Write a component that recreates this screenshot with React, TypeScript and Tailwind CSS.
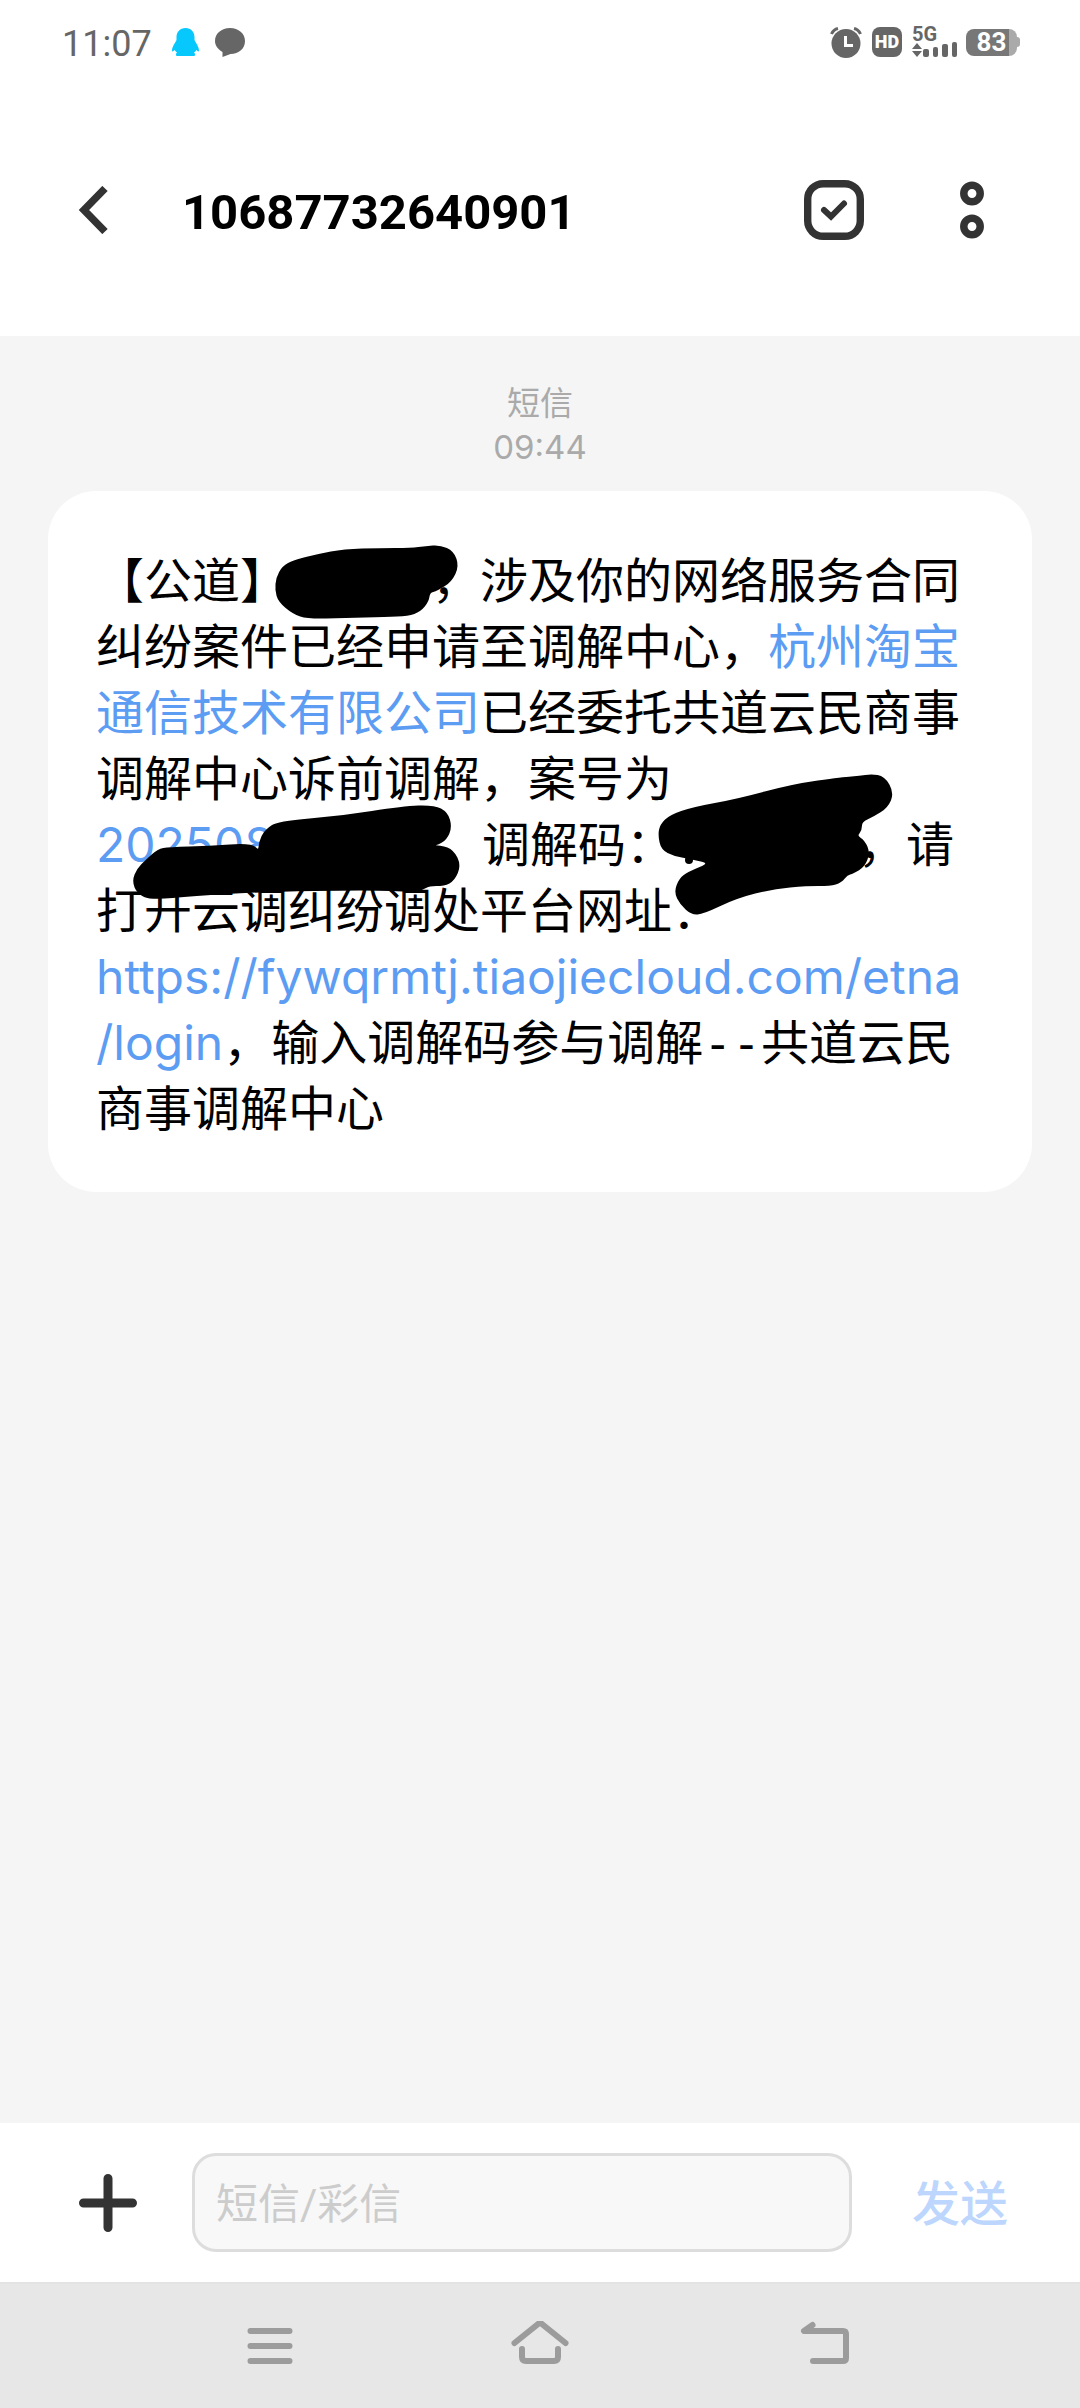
type Point = [number, number];

// closed smooth outline through the midpoints of the given points
function blob(points: Point[]) {
  const mid = (a: Point, b: Point) => `${(a[0] + b[0]) / 2} ${(a[1] + b[1]) / 2}`;
  const last = points[points.length - 1];
  let d = `M${mid(last, points[0])}`;
  points.forEach((p, i) => {
    d += `Q${p[0]} ${p[1]} ${mid(p, points[(i + 1) % points.length])}`;
  });
  return d + "Z";
}

const nameMark: Point[] = [
  [6, 50], [7, 38], [13, 27], [24, 21], [48, 15], [74, 10], [110, 9], [141, 9], [156, 7], [170, 6],
  [183, 12], [188, 26], [181, 41], [167, 50], [159, 52], [158, 61], [150, 71], [138, 75], [116, 76],
  [74, 77], [38, 78], [23, 73], [9, 61],
];

const caseMark: Point[] = [
  [138, 48], [139, 38], [144, 27], [157, 18], [220, 13], [282, 3], [313, 2], [326, 9], [330, 23],
  [325, 35], [315, 41], [300, 42], [320, 42], [332, 47], [339, 61], [333, 76], [323, 81], [308, 81],
  [300, 86], [290, 87], [248, 85], [138, 87], [73, 91], [30, 95], [17, 89], [12, 77], [17, 65],
  [25, 57], [37, 46], [48, 44], [88, 43], [130, 40],
];

const codeMark: Point[] = [
  [9, 63], [11, 53], [20, 44], [43, 36], [87, 28], [143, 13], [193, 6], [210, 5], [221, 3], [234, 5],
  [243, 21], [237, 35], [223, 44], [211, 49], [211, 58], [206, 64], [214, 69], [219, 81], [214, 94],
  [203, 101], [197, 102], [191, 110], [180, 113], [157, 113], [123, 116], [87, 125], [53, 141],
  [42, 142], [31, 132], [25, 120], [30, 107], [38, 101], [62, 91], [40, 86], [24, 83], [12, 77],
];

function StatusBar() {
  return (
    <div className="flex h-[84px] items-center justify-between pl-[62px] pr-[60px] text-[#666666]">
      <div className="flex items-center">
        <span className="w-[110px] pt-1 text-4xl">11:07</span>
        <svg className="h-7 w-[27px]" viewBox="0 0 27 28" fill="#06c8fd">
          <path d="M13.500 0C8 0 4.500 4 4.500 9V12C3 15 0 19 0 22.500C0 24 1.500 23.500 2.500 22C3.500 23 4 24 5 24.500C4 25.500 3.500 26.500 4.500 28H22.500C23.500 26.500 23 25.500 22 24.500C23 24 23.500 23 24.500 22C25.500 23.500 27 24 27 22.500C27 19 24 15 22.500 12V9C22.500 4 19 0 13.500 0Z" />
        </svg>
        <svg className="ml-4 h-[29px] w-[30px]" viewBox="0 0 30 29" fill="currentColor">
          <path d="M15 0C6.500 0 0 5.500 0 13C0 17.500 3 21.500 7.500 24V29L15.500 26C24 26 30 20.500 30 13C30 5.500 23.500 0 15 0Z" />
        </svg>
      </div>
      <div className="flex items-center">
        <svg className="h-[31px] w-8" viewBox="0 0 32 31">
          <circle cx="16" cy="16.500" r="14.500" fill="currentColor" />
          <path d="M1.500 7Q3.500 2.500 8 1.500M30.500 7Q28.500 2.500 24 1.500" fill="none" stroke="currentColor" strokeWidth="3" />
          <path d="M15.500 9V18.500H23" fill="none" stroke="white" strokeWidth="3" />
        </svg>
        <span className="ml-[10px] flex h-[30px] w-[30px] items-center justify-center rounded-lg bg-[#666666] text-lg leading-none font-black text-white">
          HD
        </span>
        <div className="ml-[10px] flex w-[46px] flex-col">
          <span className="text-xl leading-4 font-bold">5G</span>
          <svg className="h-4 w-[46px]" viewBox="0 0 46 16" fill="currentColor">
            <path d="M0 7L5 1L10 7ZM0 9L5 15L10 9Z" />
            <rect x="11" y="7" width="6" height="8" rx="2" />
            <rect x="21" y="5" width="5" height="10" rx="2" />
            <rect x="30" y="2" width="6" height="13" rx="2" />
            <rect x="40" y="0" width="5" height="15" rx="2" />
          </svg>
        </div>
        <div className="ml-2 flex items-center">
          <span className="flex h-[27px] w-[51px] items-center justify-center rounded-lg bg-linear-to-r from-[#777777] from-85% to-[#aaaaaa] to-85% text-[26px] leading-none font-bold text-white">
            83
          </span>
          <span className="h-[10px] w-[3px] rounded-r bg-[#aaaaaa]" />
        </div>
      </div>
    </div>
  );
}

function Header() {
  return (
    <header className="flex h-[252px] items-center pl-[78px] pr-24 text-[#333333]">
      <button aria-label="返回">
        <svg className="h-12 w-[30px]" viewBox="0 0 30 48" fill="none" stroke="currentColor" strokeWidth="7.500">
          <path d="M27 2.500L6 24L27 45.500" />
        </svg>
      </button>
      <h1 className="ml-[74px] pt-1 text-[49px] leading-none font-bold text-black">10687732640901</h1>
      <button aria-label="选择" className="ml-auto">
        <svg className="h-[60px] w-[60px]" viewBox="0 0 60 60" fill="none" stroke="currentColor">
          <rect x="3.700" y="3.700" width="52.600" height="52.600" rx="15.500" strokeWidth="7.400" />
          <path d="M20 30L27 36.500L40 23.500" strokeWidth="6" strokeLinecap="round" />
        </svg>
      </button>
      <button aria-label="更多" className="ml-24">
        <svg className="h-[58px] w-6" viewBox="0 0 24 58" fill="none" stroke="currentColor" strokeWidth="7.500">
          <circle cx="12" cy="12.500" r="8.200" />
          <circle cx="12" cy="45.500" r="8.200" />
        </svg>
      </button>
    </header>
  );
}

function Message() {
  return (
    <p className="mt-[22px] rounded-[48px] bg-white px-12 pt-[57px] pb-[50px] font-['Inter','Noto_Sans_CJK_SC',sans-serif] text-5xl leading-[66px] text-black">
      【公道】
      <span className="relative inline-block h-[66px] w-36 align-top">
        <svg className="absolute -top-2 -left-[18px] h-[90px] w-[200px]" viewBox="0 0 200 90">
          <path d={blob(nameMark)} stroke="black" strokeWidth="2" />
        </svg>
      </span>
      ，涉及你的网络服务合同纠纷案件已经申请至调解中心，
      <a href="#company" className="text-[#5c9cf2]">杭州淘宝通信技术有限公司</a>
      已经委托共道云民商事调解中心诉前调解，案号为
      <span className="relative inline-block h-[66px] w-[338px] align-top">
        <a href="#case" className="text-[#5c9cf2]">202508</a>
        <svg className="absolute -top-2 left-[25px] h-[100px] w-[345px]" viewBox="0 0 345 100">
          <path d={blob(caseMark)} stroke="black" strokeWidth="2" />
        </svg>
      </span>
      ，调解码：
      <span className="relative inline-block h-[66px] w-[184px] align-top">
        <svg className="absolute -top-10 -left-6 h-[150px] w-[250px]" viewBox="0 0 250 150">
          <path d={blob(codeMark)} stroke="black" strokeWidth="2" />
          <circle cx="39" cy="88" r="4" />
        </svg>
      </span>
      ，请打开云调纠纷调处平台网址：
      <a href="#login" className="text-[#5c9cf2]">https://fywqrmtj.tiaojiecloud.com/etna<wbr />/login</a>
      ，输入调解码参与调解<span className="font-['DejaVu_Sans_Mono',monospace] leading-none">--</span>共道云民商事调解中心
    </p>
  );
}

function Composer() {
  return (
    <form className="flex items-center bg-white py-[30px] pr-[72px] pl-[78px]">
      <button type="button" aria-label="添加" className="text-[#333333]">
        <svg className="h-[60px] w-[60px]" viewBox="0 0 60 60" stroke="currentColor" strokeWidth="9" strokeLinecap="round">
          <path d="M30 5.500V54.500M5.500 30H54.500" />
        </svg>
      </button>
      <input
        type="text"
        aria-label="短信/彩信"
        placeholder="短信/彩信"
        className="ml-[54px] h-[99px] min-w-0 flex-1 rounded-3xl border-[3px] border-[#dddddd] bg-[#f8f8f8] px-[21px] pt-1 text-[42px] placeholder:text-[#cccccc]"
      />
      <button type="button" className="ml-[60px] pt-1 text-5xl font-medium text-[#bcd6fd]">发送</button>
    </form>
  );
}

function NavBar() {
  return (
    <nav className="flex h-[126px] items-center justify-center gap-[210px] border-t-2 border-[#e3e3e3] bg-[#e7e7e7] text-[#9c9c9c]">
      <button aria-label="最近任务">
        <svg className="h-[50px] w-[60px]" viewBox="0 0 60 50" stroke="currentColor" strokeWidth="6" strokeLinecap="round">
          <path d="M10.500 10H49.500M10.500 25H49.500M10.500 40H49.500" />
        </svg>
      </button>
      <button aria-label="主屏幕">
        <svg className="h-[50px] w-[60px]" viewBox="0 0 60 50" fill="none" stroke="currentColor" strokeWidth="6" strokeLinecap="round" strokeLinejoin="round">
          <path d="M4.500 22L30 1.500L55.500 22" />
          <path d="M12 28V36Q12 40 16 40H44Q48 40 48 36V28" />
        </svg>
      </button>
      <button aria-label="返回上一级" className="pl-[15px] -mr-[15px]">
        <svg className="h-[50px] w-[60px]" viewBox="0 0 60 50" fill="none" stroke="currentColor" strokeWidth="6" strokeLinecap="round" strokeLinejoin="round">
          <path d="M17.500 4L9 10H48Q51 10 51 13V37Q51 40 48 40H18" />
        </svg>
      </button>
    </nav>
  );
}

export default function App() {
  return (
    <div className="flex min-h-screen flex-col bg-white font-['Roboto','Noto_Sans_CJK_SC',sans-serif]">
      <StatusBar />
      <Header />
      <main className="flex-1 bg-[#f5f5f5] px-12 pt-[45px]">
        <div className="text-center font-['Inter','Noto_Sans_CJK_SC',sans-serif] text-[33px] leading-[44px] text-[#aaaaaa]">
          <p>短信</p>
          <time>09:44</time>
        </div>
        <Message />
      </main>
      <Composer />
      <NavBar />
    </div>
  );
}
